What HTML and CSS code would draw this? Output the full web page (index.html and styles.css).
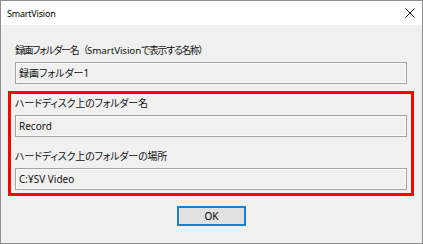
FILE: index.html
```html
<!DOCTYPE html>
<html lang="ja">
<head>
<meta charset="utf-8">
<title>SmartVision</title>
<link rel="stylesheet" href="styles.css">
</head>
<body>
<div class="window">
  <div class="titlebar">
    <span class="title">SmartVision</span>
    <svg class="close" width="10" height="10" viewBox="0 0 10 10" aria-hidden="true">
      <path d="M0.5 0.5 L9.5 9.5 M9.5 0.5 L0.5 9.5" stroke="#1a1a1a" stroke-width="1" fill="none"/>
    </svg>
  </div>
  <div class="content">
    <div class="field first">
      <div class="label long">録画フォルダー名<span class="full">（</span><span class="latin">SmartVision</span>で表示する名称）</div>
      <div class="box">録画フォルダー1</div>
    </div>
    <div class="highlight">
      <div class="field">
        <div class="label">ハードディスク上のフォルダー名</div>
        <div class="box">Record</div>
      </div>
      <div class="field second">
        <div class="label">ハードディスク上のフォルダーの場所</div>
        <div class="box">C:¥SV Video</div>
      </div>
    </div>
    <div class="actions">
      <button class="btn">OK</button>
    </div>
  </div>
</div>
</body>
</html>
```
FILE: styles.css
```css
html, body {
  margin: 0;
  padding: 0;
  background: #f0f0f0;
}
body {
  font-family: "Noto Sans", "Noto Sans CJK JP", sans-serif;
  font-size: 10px;
  color: #111;
  font-feature-settings: "palt";
}
.window {
  width: 423px;
  height: 244px;
  box-sizing: border-box;
  border: 1px solid #8e8e8e;
  background: #f0f0f0;
  display: flex;
  flex-direction: column;
}
.titlebar {
  height: 24px;
  background: #fff;
  display: flex;
  align-items: center;
  justify-content: space-between;
  padding: 0 7px 0 6px;
}
.title {
  font-size: 9px;
  letter-spacing: -0.2px;
  color: #000;
}
.close {
  display: block;
}
.content {
  padding: 19px 8px 0 7px;
  display: flex;
  flex-direction: column;
}
.field {
  display: flex;
  flex-direction: column;
  gap: 5px;
}
.field.first {
  padding: 0 7px 0 7px;
  gap: 4px;
}
.label {
  line-height: 14px;
  height: 14px;
  white-space: nowrap;
  letter-spacing: -0.2px;
}
.label.long {
  font-size: 9.8px;
  letter-spacing: -1.2px;
}
.label.long .latin {
  letter-spacing: -0.1px;
}
.full {
  font-feature-settings: normal;
}
.box {
  height: 22px;
  box-sizing: border-box;
  border: 1px solid #a3a3a3;
  box-shadow: inset 0 0 0 1px #fbfbfb;
  background: #f0f0f0;
  padding: 0 3px;
  line-height: 20px;
  white-space: nowrap;
}
.highlight {
  margin-top: 7px;
  border: 3px solid #ff0000;
  padding: 2px 4px 3px 4px;
  display: flex;
  flex-direction: column;
}
.field.second {
  margin-top: 12px;
}
.actions {
  display: flex;
  justify-content: center;
  margin-top: 10px;
}
.btn {
  width: 69px;
  height: 20px;
  box-sizing: border-box;
  border: 2px solid #1c7fd6;
  background: #e1e1e1;
  font-family: "Noto Sans", sans-serif;
  font-size: 10px;
  color: #000;
  padding: 0;
  margin-left: 1px;
}
```
